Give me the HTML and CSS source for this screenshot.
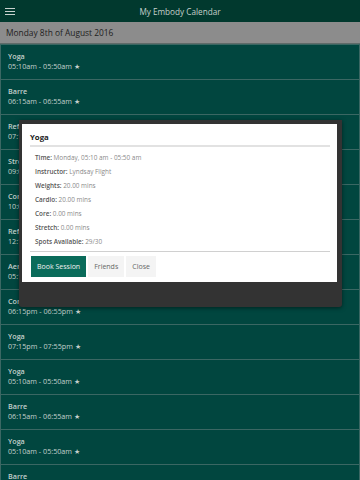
FILE: index.html
```html
<!DOCTYPE html>
<html lang="en">
    <head>
        <meta name="viewport" content="width=device-width, initial-scale=1.0">
        <title>My Embody Calendar</title>
        <link rel="stylesheet" href="styles.css">
    </head>
    <body>
        <div class="top">
            <svg class="menu" width="10" height="7" viewBox="0 0 10 7">
                <path d="M0 0.5H10M0 3.5H10M0 6.5H10" stroke="#c9d3cf" stroke-width="1"/>
            </svg>
            <span class="title">My Embody Calendar</span>
        </div>
        <div class="day">Monday 8th of August 2016</div>
        <div class="list">
            <div class="item"><b>Yoga</b><span>05:10am - 05:50am ★</span></div>
            <div class="item"><b>Barre</b><span>06:15am - 06:55am ★</span></div>
            <div class="item"><b>Reformer</b><span>07:15am - 07:55am ★</span></div>
            <div class="item"><b>Stretch</b><span>09:00am - 09:40am ★</span></div>
            <div class="item"><b>Core</b><span>10:00am - 10:40am ★</span></div>
            <div class="item"><b>Reformer</b><span>12:15pm - 12:55pm ★</span></div>
            <div class="item"><b>Aerobics</b><span>05:15pm - 05:55pm ★</span></div>
            <div class="item"><b>Core</b><span>06:15pm - 06:55pm ★</span></div>
            <div class="item"><b>Yoga</b><span>07:15pm - 07:55pm ★</span></div>
            <div class="item"><b>Yoga</b><span>05:10am - 05:50am ★</span></div>
            <div class="item"><b>Barre</b><span>06:15am - 06:55am ★</span></div>
            <div class="item"><b>Yoga</b><span>05:10am - 05:50am ★</span></div>
            <div class="item"><b>Barre</b><span>06:15am - 06:55am ★</span></div>
        </div>

        <div class="dialog">
            <div class="panel">
                <div class="ptitle">Yoga</div>
                <div class="rows">
                    <p><b>Time:</b> Monday, 05:10 am - 05:50 am</p>
                    <p><b>Instructor:</b> Lyndsay Flight</p>
                    <p><b>Weights:</b> 20.00 mins</p>
                    <p><b>Cardio:</b> 20.00 mins</p>
                    <p><b>Core:</b> 0.00 mins</p>
                    <p><b>Stretch:</b> 0.00 mins</p>
                    <p><b>Spots Available:</b> 29/30</p>
                </div>
                <div class="btns">
                    <button class="btn book">Book Session</button>
                    <button class="btn">Friends</button>
                    <button class="btn">Close</button>
                </div>
            </div>
        </div>
    </body>
</html>
```

FILE: styles.css
```css
body {
    margin: 0;
    height: 480px;
    overflow: hidden;
    background-color: #3b6763;
    font-family: "Open Sans", "Noto Sans", sans-serif;
}
.top {
    height: 22px;
    background-color: #01392e;
    display: flex;
    align-items: center;
    justify-content: center;
    position: relative;
}
.menu {
    position: absolute;
    left: 5px;
    top: 8px;
}
.title {
    color: #c6d0cc;
    font-size: 8.2px;
}
.day {
    height: 21px;
    background-color: #8c8c8c;
    border-bottom: 1px solid #5f6b69;
    color: #1e1e1e;
    font-size: 8.4px;
    padding-left: 6px;
    display: flex;
    align-items: center;
}
.list {
    padding: 1px 1px 0 1px;
}
.item {
    height: 34px;
    margin-bottom: 1px;
    background-color: #01463f;
    box-sizing: border-box;
    padding: 7px 0 0 7px;
    display: flex;
    flex-direction: column;
    color: #c3d0cc;
    font-size: 7.2px;
    line-height: 9.5px;
}
.item b {
    font-weight: 600;
}
.dialog {
    position: absolute;
    left: 19px;
    top: 120px;
    width: 323px;
    height: 187px;
    box-sizing: border-box;
    padding: 4px 5px 0 3px;
    background-color: #333333;
    border-radius: 0 0 3px 3px;
    box-shadow: 0 1px 4px rgba(0, 0, 0, 0.5);
}
.panel {
    height: 158px;
    background-color: #ffffff;
    box-sizing: border-box;
    padding: 8px 7px 0 8px;
}
.ptitle {
    font-size: 7.8px;
    font-weight: 700;
    color: #222;
    padding-bottom: 3px;
    border-bottom: 2px solid #e2e2e2;
}
.rows {
    padding: 4px 0 2px 5px;
    border-bottom: 1px solid #d0d0d0;
}
.rows p {
    margin: 0;
    font-size: 6.4px;
    line-height: 14px;
    color: #8a8a8a;
}
.rows b {
    color: #555;
    font-weight: 600;
}
.btns {
    display: flex;
    gap: 2px;
    padding: 4px 0 0 1px;
}
.btn {
    height: 21px;
    border: none;
    background-color: #f4f4f4;
    color: #666;
    font-family: "Open Sans", "Noto Sans", sans-serif;
    font-size: 7px;
    padding: 0 6px;
}
.book {
    background-color: #0a6b5a;
    color: #f2f2f2;
}
```
